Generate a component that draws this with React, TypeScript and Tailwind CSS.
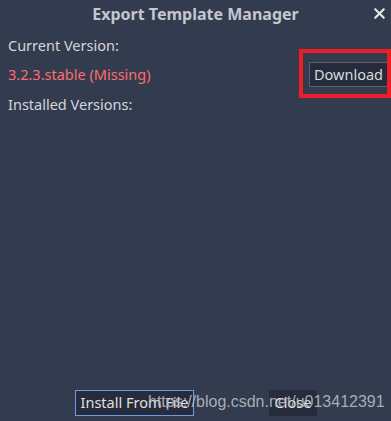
import { X } from "lucide-react";

const font = { fontFamily: '"Noto Sans", "Open Sans", sans-serif' };

export default function App() {
  return (
    <div
      className="relative w-[391px] h-[421px] bg-[#333b4f] text-[#e0e0e0] overflow-hidden flex flex-col"
      style={font}
    >
      {/* Title bar */}
      <div className="relative h-[28px] flex items-center justify-center">
        <span className="text-[16px] font-bold text-[#c4c7cd] leading-none">
          Export Template Manager
        </span>
        <button className="absolute right-[3px] top-[5px] text-[#e6e6e6]">
          <X className="w-[17px] h-[17px]" strokeWidth={3} />
        </button>
      </div>

      <div className="flex flex-col px-[8px] pt-[7px]">
        <div className="text-[14.5px] leading-[20px] text-[#d4d6da]">Current Version:</div>
        <div className="flex items-center justify-between mt-[7px]">
          <span className="text-[14.5px] text-[#ff6d6d]">3.2.3.stable (Missing)</span>
          <button className="-mr-[5px] w-[79px] h-[25px] bg-[#262c3b] border border-[#5a6070] text-[14.5px] text-[#d8dade] flex items-center justify-center">
            Download
          </button>
        </div>
        <div className="text-[14.5px] leading-[20px] text-[#d4d6da] mt-[7px]">Installed Versions:</div>
      </div>

      {/* red highlight annotation */}
      <div className="absolute left-[299px] top-[49px] w-[92px] h-[49px] border-[4px] border-[#ee1c25] pointer-events-none" />

      <div className="flex-1" />

      {/* Bottom buttons */}
      <div className="flex items-start pl-[75px] pb-[5px] gap-[75px]">
        <button className="w-[119px] h-[26px] bg-[#262c3b] border border-[#6e9be3] text-[14.5px] text-[#e0e0e0] flex items-center justify-center">
          Install From File
        </button>
        <button className="w-[48px] h-[26px] bg-[#262c3b] text-[14.5px] text-[#e0e0e0] flex items-center justify-center">
          Close
        </button>
      </div>

      {/* watermark */}
      <div
        className="absolute left-[148px] top-[390px] text-[16px] text-[#b8bcc4]/90 pointer-events-none"
        style={{ fontFamily: '"Liberation Sans", Arial, sans-serif' }}
      >
        https://blog.csdn.net/u013412391
      </div>
    </div>
  );
}
